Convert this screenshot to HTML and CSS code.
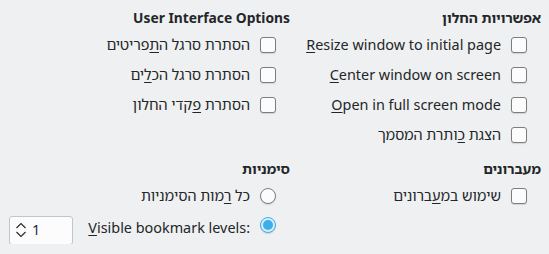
FILE: index.html
```html
<!DOCTYPE html>
<html lang="he" dir="rtl">
<head>
    <meta charset="UTF-8">
    <title>General options</title>
    <link rel="stylesheet" href="styles.css">
</head>
<body>
    <div class="page">
        <div class="group group-window">
            <h2>אפשרויות החלון</h2>
            <label class="row"><span class="check"></span><span class="ltr"><u>R</u>esize window to initial page</span></label>
            <label class="row"><span class="check"></span><span class="ltr"><u>C</u>enter window on screen</span></label>
            <label class="row"><span class="check"></span><span class="ltr"><u>O</u>pen in full screen mode</span></label>
            <label class="row"><span class="check"></span><span>הצגת <u>כ</u>ותרת המסמך</span></label>
        </div>

        <div class="group group-ui">
            <h2 class="ltr-head">User Interface Options</h2>
            <label class="row"><span class="check"></span><span>הסתרת סרגל ה<u>ת</u>פריטים</span></label>
            <label class="row"><span class="check"></span><span>הסתרת סרגל הכ<u>ל</u>ים</span></label>
            <label class="row"><span class="check"></span><span>הסתרת <u>פ</u>קדי החלון</span></label>
        </div>

        <div class="group group-tabs">
            <h2>מעברונים</h2>
            <label class="row"><span class="check"></span><span>שימוש במ<u>ע</u>ברונים</span></label>
        </div>

        <div class="group group-bookmarks">
            <h2>סימניות</h2>
            <label class="row"><span class="radio"></span><span>כל <u>ר</u>מות הסימניות</span></label>
            <div class="row row-spin">
                <span class="radio checked"></span>
                <span class="ltr"><u>V</u>isible bookmark levels:</span>
                <div class="spinbox">
                    <svg width="12" height="20" viewBox="0 0 12 20">
                        <path d="M1.5 8 L6 3.5 L10.5 8" fill="none" stroke="#232629" stroke-width="1.1"/>
                        <path d="M1.5 12 L6 16.5 L10.5 12" fill="none" stroke="#232629" stroke-width="1.1"/>
                    </svg>
                    <span class="spin-value">1</span>
                </div>
            </div>
        </div>
    </div>
</body>
</html>
```

FILE: styles.css
```css
* {
    margin: 0;
    padding: 0;
    box-sizing: border-box;
}

body {
    background: #eff0f1;
    color: #232629;
    font-family: 'Noto Sans', 'Noto Sans Hebrew', 'DejaVu Sans', sans-serif;
    font-size: 14.4px;
    line-height: 20px;
}

.page {
    display: grid;
    grid-template-columns: 241px 1fr;
    column-gap: 10px;
    padding: 8px 8px 0 9px;
}

h2 {
    font-size: 13.8px;
    font-weight: bold;
    line-height: 20px;
    height: 20px;
    margin-bottom: 2px;
}

.ltr-head {
    direction: ltr;
    text-align: right;
}

.group-tabs,
.group-bookmarks {
    margin-top: 9px;
}

.row {
    display: flex;
    align-items: center;
    gap: 10px;
    height: 30px;
    padding-right: 14px;
}

.ltr {
    direction: ltr;
    unicode-bidi: isolate;
}

u {
    text-decoration: underline;
    text-underline-offset: 2px;
    text-decoration-thickness: 1px;
}

.check {
    width: 16px;
    height: 16px;
    flex: none;
    border: 1px solid #7b7e80;
    border-radius: 3px;
    background: #fcfcfc;
    box-shadow: 0 1px 1px rgba(0,0,0,0.12);
}

.radio {
    width: 16px;
    height: 16px;
    flex: none;
    border: 1px solid #7b7e80;
    border-radius: 50%;
    background: #fcfcfc;
    box-shadow: 0 1px 1px rgba(0,0,0,0.12);
    position: relative;
}

.radio.checked {
    border-color: #3daee9;
    background: #d6ecf8;
}

.radio.checked::after {
    content: "";
    position: absolute;
    top: 2px;
    left: 2px;
    width: 10px;
    height: 10px;
    border-radius: 50%;
    background: #3daee9;
}

.row-spin {
    height: 32px;
    margin-top: 1px;
}

.row-spin .radio {
    align-self: flex-start;
    margin-top: 5px;
}

.spinbox {
    margin-right: auto;
    direction: ltr;
    display: flex;
    align-items: center;
    gap: 5px;
    width: 64px;
    height: 29px;
    padding-left: 5px;
    margin-top: 4px;
    background: #fcfcfc;
    border: 1px solid #c3c6c9;
    border-radius: 3px;
}

.spin-value {
    color: #1d2a4a;
}
```
